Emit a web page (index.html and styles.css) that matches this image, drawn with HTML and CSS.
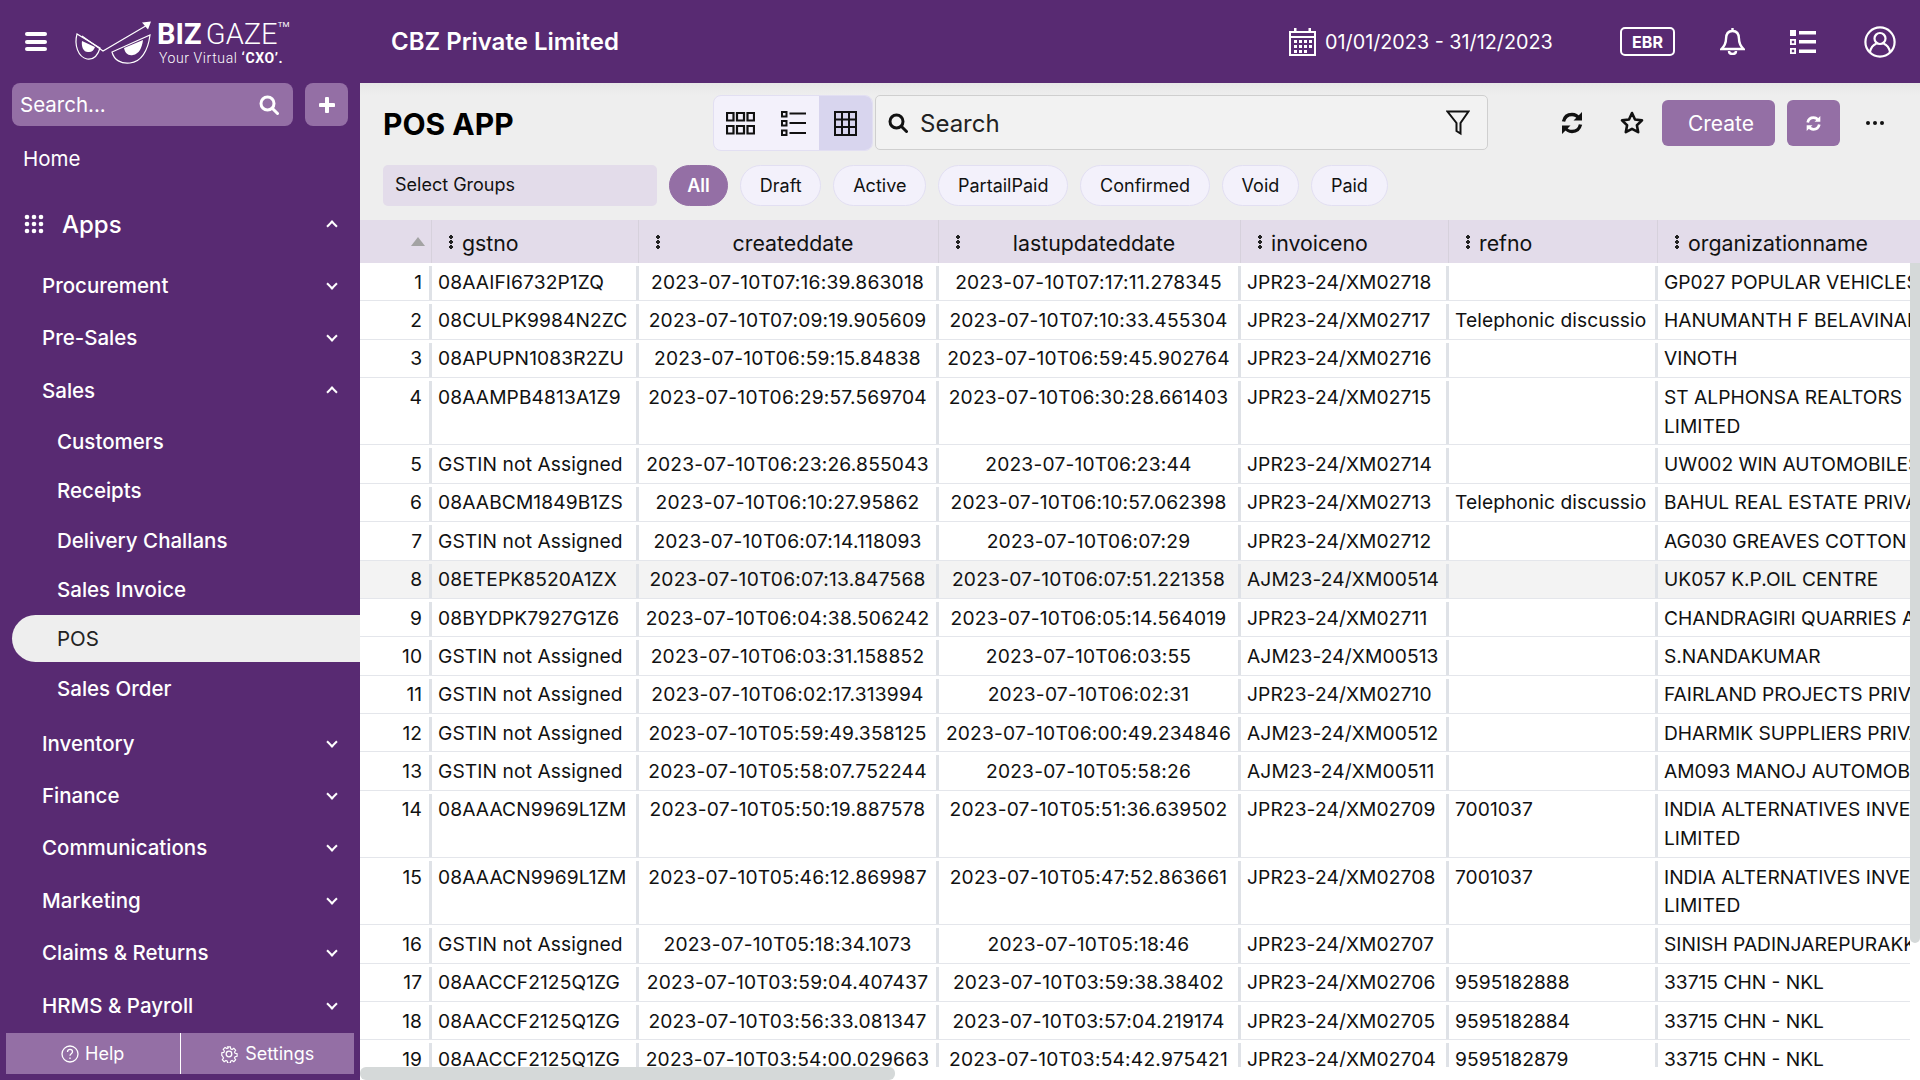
FILE: index.html
```html
<!DOCTYPE html>
<html lang="en">
<head>
    <meta charset="UTF-8">
    <title>POS APP</title>
    <link rel="stylesheet" href="styles.css">
</head>
<body>
    <header class="topbar">
        <div class="burger"><span></span><span></span><span></span></div>
        <div class="logo">
            <svg class="logo-eyes" width="80" height="46" viewBox="0 0 80 46" fill="none" stroke="#fff" stroke-width="1.2">
                <path d="M3 13C0 24 4 36 13 38c7 1 11-4 13-11L3 13z"/>
                <path d="M8 20c-1 6 2 12 7 11 3 0 5-2 6-5L8 20z" fill="#fff" stroke="none"/>
                <path d="M8 15l21 15L75 3"/>
                <path d="M68 1.500l9-1-3 8z" fill="#fff" stroke="none"/>
                <path d="M38 31c2 8 9 12 18 11 11-1 18-12 20-28L38 31z"/>
                <path d="M50 27c1 5 4 8 9 7 6-1 9-7 10-15L50 27z" fill="#fff" stroke="none"/>
            </svg>
            <div class="logo-text">
                <div class="logo-name"><b>BIZ</b> <span>GAZE</span><sup>TM</sup></div>
                <div class="logo-tag">Your Virtual <b>‘CXO’.</b></div>
            </div>
        </div>
        <div class="company">CBZ Private Limited</div>
        <div class="date-range">
            <svg width="27" height="28" viewBox="0 0 27 28" fill="#fff">
                <path d="M5 0h2.500v3h12V0H22v3h5v25H0V3h5V0zM2 5v3h23V5H2zm0 5v16h23V10H2z"/>
                <path d="M5 12h3v3H5zM10 12h3v3h-3zM15 12h3v3h-3zM20 12h3v3h-3zM5 17h3v3H5zM10 17h3v3h-3zM15 17h3v3h-3zM20 17h3v3h-3zM5 22h3v3H5zM10 22h3v3h-3zM15 22h3v3h-3z"/>
            </svg>
            <span>01/01/2023 - 31/12/2023</span>
        </div>
        <div class="ebr">EBR</div>
        <svg class="top-icon bell" width="25" height="27" viewBox="0 0 25 27" fill="none" stroke="#fff" stroke-width="2.400">
            <path d="M12.500 3c-4.500 0-6.500 3.500-6.500 8 0 5-2 7.500-4.500 10h22c-2.500-2.500-4.500-5-4.500-10 0-4.500-2-8-6.500-8z"/>
            <path d="M12.500 0v3M9 23c0 2 1.500 3 3.500 3s3.500-1 3.500-3"/>
        </svg>
        <svg class="top-icon list" width="26" height="24" viewBox="0 0 26 24" fill="#fff">
            <path d="M0 0h6v6H0zM9 1h17v3.500H9zM9 10h17v3.500H9zM9 19.500h17V23H9z"/>
            <path d="M0 9h6v6H0zm1.800 1.800v2.400h2.400v-2.400zM0 18h6v6H0zm1.800 1.800v2.400h2.400v-2.400z" fill-rule="evenodd"/>
        </svg>
        <svg class="top-icon user" width="32" height="32" viewBox="0 0 32 32" fill="none" stroke="#fff" stroke-width="2.200">
            <circle cx="16" cy="16" r="14.600"/>
            <circle cx="16" cy="12.500" r="5.500"/>
            <path d="M6 26c1-5 4-7.500 6.500-8.500M26 26c-1-5-4-7.500-6.500-8.500"/>
        </svg>
    </header>

    <div class="page">
        <aside class="sidebar">
            <div class="side-search">
                <div class="side-input">
                    <span>Search...</span>
                    <svg width="20" height="20" viewBox="0 0 20 20" fill="none" stroke="#fff" stroke-width="3"><circle cx="8.500" cy="8.500" r="6.500"/><path d="M13.500 13.500l5 5" stroke-linecap="round"/></svg>
                </div>
                <div class="side-add">
                    <svg width="16" height="16" viewBox="0 0 16 16"><path d="M8 1.500v13M1.500 8h13" stroke="#fff" stroke-width="4" stroke-linecap="round"/></svg>
                </div>
            </div>
            <nav class="nav">
                <div class="nav-home">Home</div>
                <div class="nav-apps">
                    <svg width="20" height="20" viewBox="0 0 20 20" fill="#fff">
                        <circle cx="3" cy="3" r="2.300"/><circle cx="10" cy="3" r="2.300"/><circle cx="17" cy="3" r="2.300"/>
                        <circle cx="3" cy="10" r="2.300"/><circle cx="10" cy="10" r="2.300"/><circle cx="17" cy="10" r="2.300"/>
                        <circle cx="3" cy="17" r="2.300"/><circle cx="10" cy="17" r="2.300"/><circle cx="17" cy="17" r="2.300"/>
                    </svg>
                    <span>Apps</span>
                    <i class="chev up"></i>
                </div>
                <div class="nav-item"><span>Procurement</span><i class="chev"></i></div>
                <div class="nav-item"><span>Pre-Sales</span><i class="chev"></i></div>
                <div class="nav-item"><span>Sales</span><i class="chev up"></i></div>
                <div class="nav-sub">
                    <div class="sub-item">Customers</div>
                    <div class="sub-item">Receipts</div>
                    <div class="sub-item">Delivery Challans</div>
                    <div class="sub-item">Sales Invoice</div>
                    <div class="sub-item active">POS</div>
                    <div class="sub-item">Sales Order</div>
                </div>
                <div class="nav-item"><span>Inventory</span><i class="chev"></i></div>
                <div class="nav-item"><span>Finance</span><i class="chev"></i></div>
                <div class="nav-item"><span>Communications</span><i class="chev"></i></div>
                <div class="nav-item"><span>Marketing</span><i class="chev"></i></div>
                <div class="nav-item"><span>Claims &amp; Returns</span><i class="chev"></i></div>
                <div class="nav-item"><span>HRMS &amp; Payroll</span><i class="chev"></i></div>
            </nav>
            <div class="side-foot">
                <div class="foot-btn">
                    <svg width="18" height="18" viewBox="0 0 18 18" fill="none" stroke="#fff" stroke-width="1.300"><circle cx="9" cy="9" r="8"/><path d="M6.500 7c0-1.700 1.100-2.600 2.500-2.600s2.500 1 2.500 2.300c0 2-2.500 2-2.500 4"/><path d="M9 12.600v1.500"/></svg>
                    <span>Help</span>
                </div>
                <div class="foot-btn">
                    <svg width="18" height="18" viewBox="0 0 18 18" fill="none" stroke="#fff" stroke-width="1.300"><circle cx="9" cy="9" r="2.800"/><path d="M7.500 1h3l.4 2.300 1.500.7 2-1.300 2 2.100-1.300 1.900.7 1.500 2.200.4v3l-2.200.4-.7 1.500 1.300 1.900-2 2.100-2-1.300-1.500.7-.4 2.300h-3l-.4-2.300-1.500-.7-2 1.300-2-2.100 1.300-1.900-.7-1.500L1 10.600v-3l2.200-.4.700-1.500-1.300-1.900 2-2.100 2 1.300 1.500-.7z" transform="translate(.9 .9) scale(.9)"/></svg>
                    <span>Settings</span>
                </div>
            </div>
        </aside>

        <main class="main">
            <div class="toolbar">
                <h1 class="title">POS APP</h1>
                <div class="view-toggle">
                    <div class="view-btn">
                        <svg width="29" height="23" viewBox="0 0 29 23" fill="none" stroke="#111" stroke-width="2.200"><path d="M1 1h6.500v7.500H1zM11 1h7v7.500h-7zM21.500 1H28v7.500h-6.500zM1 14h6.500v7.500H1zM11 14h7v7.500h-7zM21.500 14H28v7.500h-6.500z"/></svg>
                    </div>
                    <div class="view-btn">
                        <svg width="25" height="25" viewBox="0 0 25 25" fill="none" stroke="#111" stroke-width="2"><path d="M1 1h4.500v4.500H1zM1 10h4.500v4.500H1zM1 19.500h4.500V24H1zM8.500 2.500H25M8.500 12H25M8.500 22H25"/></svg>
                    </div>
                    <div class="view-btn active">
                        <svg width="23" height="25" viewBox="0 0 23 25" fill="none" stroke="#111" stroke-width="2"><path d="M1 1h21v23H1zM1 8.500h21M1 16h21M8 1v23M15 1v23"/></svg>
                    </div>
                </div>
                <div class="search-box">
                    <svg width="20" height="20" viewBox="0 0 20 20" fill="none" stroke="#111" stroke-width="3"><circle cx="8.500" cy="8.500" r="6.500"/><path d="M13.500 13.500l5 5" stroke-linecap="round"/></svg>
                    <span class="search-text">Search</span>
                    <svg width="24" height="26" viewBox="0 0 24 26" fill="none" stroke="#111" stroke-width="2"><path d="M1.500 1.500h21L14.500 13v10.500l-4-2.500v-8z"/></svg>
                </div>
                <div class="actions">
                    <svg class="act-refresh" width="22" height="22" viewBox="0 0 22 22" fill="none" stroke="#111" stroke-width="3.400"><path d="M2.500 9.500C3.500 5 6.500 2.500 11 2.500c3 0 5.500 1.500 7 4"/><path d="M19.500 12.500c-1 4.500-4 7-8.500 7-3 0-5.500-1.500-7-4"/><path d="M21 0v8.500h-8.500zM1 22v-8.500h8.500z" fill="#111" stroke="none"/></svg>
                    <svg class="act-star" width="24" height="24" viewBox="0 0 24 24" fill="none" stroke="#111" stroke-width="2.600" stroke-linejoin="round"><path d="M12 2l3 6.500 7 .9-5.100 4.800 1.300 7L12 17.800l-6.200 3.400 1.300-7L2 9.400l7-.9z"/></svg>
                    <button class="btn-create">Create</button>
                    <button class="btn-sync">
                        <svg width="15" height="15" viewBox="0 0 22 22" fill="none" stroke="#fff" stroke-width="4"><path d="M2.500 9.500C3.500 5 6.500 2.500 11 2.500c3 0 5.500 1.500 7 4"/><path d="M19.500 12.500c-1 4.500-4 7-8.500 7-3 0-5.500-1.500-7-4"/><path d="M21 0v8.500h-8.500zM1 22v-8.500h8.500z" fill="#fff" stroke="none"/></svg>
                    </button>
                    <div class="more"><span></span><span></span><span></span></div>
                </div>
            </div>

            <div class="filters">
                <div class="select-groups">Select Groups</div>
                <div class="pills">
                    <div class="pill on">All</div>
                    <div class="pill">Draft</div>
                    <div class="pill">Active</div>
                    <div class="pill">PartailPaid</div>
                    <div class="pill">Confirmed</div>
                    <div class="pill">Void</div>
                    <div class="pill">Paid</div>
                </div>
            </div>

            <div class="grid">
                <div class="grid-head">
                    <div class="hd c-no"><i class="sort"></i></div>
                    <div class="hd c-gst"><i class="dots"></i><span>gstno</span></div>
                    <div class="hd c-created center"><i class="dots"></i><span>createddate</span></div>
                    <div class="hd c-updated center"><i class="dots"></i><span>lastupdateddate</span></div>
                    <div class="hd c-inv"><i class="dots"></i><span>invoiceno</span></div>
                    <div class="hd c-ref"><i class="dots"></i><span>refno</span></div>
                    <div class="hd c-org"><i class="dots"></i><span>organizationname</span></div>
                </div>
                <div class="grid-mid">
                    <div class="grid-body">
                        <div class="row"><div class="c-no">1</div><div class="c-gst">08AAIFI6732P1ZQ</div><div class="c-created">2023-07-10T07:16:39.863018</div><div class="c-updated">2023-07-10T07:17:11.278345</div><div class="c-inv">JPR23-24/XM02718</div><div class="c-ref"></div><div class="c-org">GP027 POPULAR VEHICLES</div></div>
                        <div class="row"><div class="c-no">2</div><div class="c-gst">08CULPK9984N2ZC</div><div class="c-created">2023-07-10T07:09:19.905609</div><div class="c-updated">2023-07-10T07:10:33.455304</div><div class="c-inv">JPR23-24/XM02717</div><div class="c-ref">Telephonic discussio</div><div class="c-org">HANUMANTH F BELAVINAL</div></div>
                        <div class="row"><div class="c-no">3</div><div class="c-gst">08APUPN1083R2ZU</div><div class="c-created">2023-07-10T06:59:15.84838</div><div class="c-updated">2023-07-10T06:59:45.902764</div><div class="c-inv">JPR23-24/XM02716</div><div class="c-ref"></div><div class="c-org">VINOTH</div></div>
                        <div class="row"><div class="c-no">4</div><div class="c-gst">08AAMPB4813A1Z9</div><div class="c-created">2023-07-10T06:29:57.569704</div><div class="c-updated">2023-07-10T06:30:28.661403</div><div class="c-inv">JPR23-24/XM02715</div><div class="c-ref"></div><div class="c-org">ST ALPHONSA REALTORS<br>LIMITED</div></div>
                        <div class="row"><div class="c-no">5</div><div class="c-gst">GSTIN not Assigned</div><div class="c-created">2023-07-10T06:23:26.855043</div><div class="c-updated">2023-07-10T06:23:44</div><div class="c-inv">JPR23-24/XM02714</div><div class="c-ref"></div><div class="c-org">UW002 WIN AUTOMOBILES</div></div>
                        <div class="row"><div class="c-no">6</div><div class="c-gst">08AABCM1849B1ZS</div><div class="c-created">2023-07-10T06:10:27.95862</div><div class="c-updated">2023-07-10T06:10:57.062398</div><div class="c-inv">JPR23-24/XM02713</div><div class="c-ref">Telephonic discussio</div><div class="c-org">BAHUL REAL ESTATE PRIVATE</div></div>
                        <div class="row"><div class="c-no">7</div><div class="c-gst">GSTIN not Assigned</div><div class="c-created">2023-07-10T06:07:14.118093</div><div class="c-updated">2023-07-10T06:07:29</div><div class="c-inv">JPR23-24/XM02712</div><div class="c-ref"></div><div class="c-org">AG030 GREAVES COTTON</div></div>
                        <div class="row hover"><div class="c-no">8</div><div class="c-gst">08ETEPK8520A1ZX</div><div class="c-created">2023-07-10T06:07:13.847568</div><div class="c-updated">2023-07-10T06:07:51.221358</div><div class="c-inv">AJM23-24/XM00514</div><div class="c-ref"></div><div class="c-org">UK057 K.P.OIL CENTRE</div></div>
                        <div class="row"><div class="c-no">9</div><div class="c-gst">08BYDPK7927G1Z6</div><div class="c-created">2023-07-10T06:04:38.506242</div><div class="c-updated">2023-07-10T06:05:14.564019</div><div class="c-inv">JPR23-24/XM02711</div><div class="c-ref"></div><div class="c-org">CHANDRAGIRI QUARRIES AND</div></div>
                        <div class="row"><div class="c-no">10</div><div class="c-gst">GSTIN not Assigned</div><div class="c-created">2023-07-10T06:03:31.158852</div><div class="c-updated">2023-07-10T06:03:55</div><div class="c-inv">AJM23-24/XM00513</div><div class="c-ref"></div><div class="c-org">S.NANDAKUMAR</div></div>
                        <div class="row"><div class="c-no">11</div><div class="c-gst">GSTIN not Assigned</div><div class="c-created">2023-07-10T06:02:17.313994</div><div class="c-updated">2023-07-10T06:02:31</div><div class="c-inv">JPR23-24/XM02710</div><div class="c-ref"></div><div class="c-org">FAIRLAND PROJECTS PRIVATE</div></div>
                        <div class="row"><div class="c-no">12</div><div class="c-gst">GSTIN not Assigned</div><div class="c-created">2023-07-10T05:59:49.358125</div><div class="c-updated">2023-07-10T06:00:49.234846</div><div class="c-inv">AJM23-24/XM00512</div><div class="c-ref"></div><div class="c-org">DHARMIK SUPPLIERS PRIVATE</div></div>
                        <div class="row"><div class="c-no">13</div><div class="c-gst">GSTIN not Assigned</div><div class="c-created">2023-07-10T05:58:07.752244</div><div class="c-updated">2023-07-10T05:58:26</div><div class="c-inv">AJM23-24/XM00511</div><div class="c-ref"></div><div class="c-org">AM093 MANOJ AUTOMOBILES</div></div>
                        <div class="row"><div class="c-no">14</div><div class="c-gst">08AAACN9969L1ZM</div><div class="c-created">2023-07-10T05:50:19.887578</div><div class="c-updated">2023-07-10T05:51:36.639502</div><div class="c-inv">JPR23-24/XM02709</div><div class="c-ref">7001037</div><div class="c-org">INDIA ALTERNATIVES INVESTMENT<br>LIMITED</div></div>
                        <div class="row"><div class="c-no">15</div><div class="c-gst">08AAACN9969L1ZM</div><div class="c-created">2023-07-10T05:46:12.869987</div><div class="c-updated">2023-07-10T05:47:52.863661</div><div class="c-inv">JPR23-24/XM02708</div><div class="c-ref">7001037</div><div class="c-org">INDIA ALTERNATIVES INVESTMENT<br>LIMITED</div></div>
                        <div class="row"><div class="c-no">16</div><div class="c-gst">GSTIN not Assigned</div><div class="c-created">2023-07-10T05:18:34.1073</div><div class="c-updated">2023-07-10T05:18:46</div><div class="c-inv">JPR23-24/XM02707</div><div class="c-ref"></div><div class="c-org">SINISH PADINJAREPURAKKAL</div></div>
                        <div class="row"><div class="c-no">17</div><div class="c-gst">08AACCF2125Q1ZG</div><div class="c-created">2023-07-10T03:59:04.407437</div><div class="c-updated">2023-07-10T03:59:38.38402</div><div class="c-inv">JPR23-24/XM02706</div><div class="c-ref">9595182888</div><div class="c-org">33715 CHN - NKL</div></div>
                        <div class="row"><div class="c-no">18</div><div class="c-gst">08AACCF2125Q1ZG</div><div class="c-created">2023-07-10T03:56:33.081347</div><div class="c-updated">2023-07-10T03:57:04.219174</div><div class="c-inv">JPR23-24/XM02705</div><div class="c-ref">9595182884</div><div class="c-org">33715 CHN - NKL</div></div>
                        <div class="row"><div class="c-no">19</div><div class="c-gst">08AACCF2125Q1ZG</div><div class="c-created">2023-07-10T03:54:00.029663</div><div class="c-updated">2023-07-10T03:54:42.975421</div><div class="c-inv">JPR23-24/XM02704</div><div class="c-ref">9595182879</div><div class="c-org">33715 CHN - NKL</div></div>
                    </div>
                    <div class="vscroll"><div class="vthumb"></div></div>
                </div>
                <div class="hscroll"><div class="hthumb"></div></div>
            </div>
        </main>
    </div>
</body>
</html>
```

FILE: styles.css
```css
* {
    box-sizing: border-box;
}
html, body {
    height: 100%;
}
body {
    margin: 0;
    font-family: Inter, "Noto Sans", sans-serif;
    color: #111;
    background: #eee;
    overflow: hidden;
}

/* top bar */
.topbar {
    height: 83px;
    background: #582a72;
    color: #fff;
    display: flex;
    align-items: center;
}
.burger {
    width: 22px;
    margin-left: 25px;
    display: flex;
    flex-direction: column;
    gap: 3.500px;
}
.burger span {
    height: 4px;
    background: #fff;
    border-radius: 2px;
}
.logo {
    margin-left: 27px;
    width: 317px;
    padding-top: 3px;
    display: flex;
    align-items: flex-start;
}
.logo-eyes {
    margin-top: 2px;
}
.logo-text {
    margin-left: 3px;
    font-family: Roboto, sans-serif;
}
.logo-name {
    font-size: 29px;
    line-height: 30px;
    white-space: nowrap;
}
.logo-name b {
    font-weight: 700;
}
.logo-name span {
    font-weight: 300;
    margin-left: -3px;
}
.logo-name sup {
    font-size: 8px;
    line-height: 0;
    vertical-align: 17px;
}
.logo-tag {
    margin: 2px 0 0 2px;
    font-size: 14px;
    line-height: 14px;
    font-weight: 300;
    letter-spacing: 0.6px;
    white-space: nowrap;
}
.logo-tag b {
    font-weight: 700;
}
.company {
    font-size: 24px;
    font-weight: 600;
    width: 898px;
}
.date-range {
    width: 331px;
    display: flex;
    align-items: center;
    gap: 9px;
    font-size: 19.800px;
}
.ebr {
    width: 55px;
    height: 29px;
    border: 2.500px solid #fff;
    border-radius: 5px;
    font-size: 16px;
    font-weight: 700;
    display: flex;
    align-items: center;
    justify-content: center;
}
.bell {
    margin-left: 45px;
}
.list {
    margin-left: 45px;
}
.user {
    margin-left: 48px;
}

/* sidebar */
.page {
    display: flex;
    height: 997px;
}
.sidebar {
    width: 360px;
    flex-shrink: 0;
    background: #582a72;
    color: #fff;
    display: flex;
    flex-direction: column;
    overflow: hidden;
}
.side-search {
    display: flex;
    gap: 12px;
    padding-left: 12px;
}
.side-input {
    width: 281px;
    height: 43px;
    background: #946fa5;
    border-radius: 8px;
    padding: 0 7px 0 8px;
    display: flex;
    align-items: center;
    justify-content: space-between;
    font-size: 20.500px;
}
.side-input svg {
    margin-right: 7px;
}
.side-add {
    width: 43px;
    height: 43px;
    background: #946fa5;
    border-radius: 8px;
    display: flex;
    align-items: center;
    justify-content: center;
}
.nav {
    flex: 1;
    min-height: 0;
    padding-top: 15px;
}
.nav-home {
    padding-left: 23px;
    font-size: 20.500px;
    line-height: 36px;
}
.nav-apps {
    margin-top: 23px;
    height: 48px;
    padding: 0 23px 0 24px;
    display: flex;
    align-items: center;
    font-size: 24px;
    font-weight: 500;
}
.nav-apps span {
    margin-left: 18px;
    flex: 1;
}
.nav-item {
    height: 52.400px;
    padding: 0 23px 0 42px;
    display: flex;
    align-items: center;
    justify-content: space-between;
    font-size: 20.500px;
    font-weight: 500;
}
.nav-apps + .nav-item {
    margin-top: 11.400px;
}
.nav-sub {
    padding-bottom: 4.100px;
}
.sub-item {
    height: 49.400px;
    padding-left: 45px;
    margin-left: 12px;
    display: flex;
    align-items: center;
    font-size: 20.500px;
}
.sub-item:not(.active) {
    font-weight: 500;
}
.sub-item.active {
    background: #eee;
    color: #222;
    border-radius: 24px 0 0 24px;
    height: 47px;
    margin: 1px 0 1.400px 12px;
}
.chev {
    width: 8px;
    height: 8px;
    border-right: 2.500px solid #fff;
    border-bottom: 2.500px solid #fff;
    transform: rotate(45deg);
    margin: -3px 1px 0 0;
}
.chev.up {
    transform: rotate(225deg);
    margin-top: 4px;
}
.side-foot {
    display: flex;
    height: 41px;
    margin: 0 6px 6px;
    background: #946fa5;
    flex-shrink: 0;
}
.foot-btn {
    flex: 1;
    display: flex;
    align-items: center;
    justify-content: center;
    gap: 6px;
    font-size: 18px;
}
.foot-btn + .foot-btn {
    border-left: 1px solid #fff;
    gap: 7px;
}

/* toolbar */
.main {
    flex: 1;
    min-width: 0;
    display: flex;
    flex-direction: column;
    background: linear-gradient(#e7e7e7, #eee 12px);
}
.toolbar {
    height: 82px;
    padding-top: 12px;
    padding-left: 23px;
    display: flex;
    align-items: flex-start;
}
.title {
    margin: 0;
    width: 330px;
    font-size: 30px;
    line-height: 58px;
    font-weight: 700;
    color: #000;
}
.view-toggle {
    width: 160px;
    height: 56px;
    background: #f3f1fb;
    border: 1px solid #e2dff2;
    border-radius: 8px;
    display: flex;
    overflow: hidden;
}
.view-btn {
    width: 53px;
    display: flex;
    align-items: center;
    justify-content: center;
}
.view-btn.active {
    background: #d8d5ee;
}
.search-box {
    width: 613px;
    height: 55px;
    margin-left: 2px;
    background: #f2f2f2;
    border: 1.500px solid #cfcfcf;
    border-radius: 5px;
    padding: 0 17px 0 12px;
    display: flex;
    align-items: center;
}
.search-text {
    flex: 1;
    font-size: 24px;
    padding-top: 2px;
    margin-left: 12px;
    color: #222;
}
.actions {
    display: flex;
    align-items: center;
    height: 46px;
    margin-top: 5px;
}
.act-refresh {
    margin-left: 73px;
}
.act-star {
    margin-left: 37px;
}
.btn-create {
    margin-left: 18px;
    width: 113px;
    height: 46px;
    padding: 0 0 0 5px;
    border: none;
    border-radius: 6px;
    background: #946fa5;
    color: #fff;
    font-family: inherit;
    font-size: 21px;
}
.btn-sync {
    margin-left: 12px;
    width: 53px;
    height: 46px;
    border: none;
    border-radius: 6px;
    background: #946fa5;
    display: flex;
    align-items: center;
    justify-content: center;
}
.more {
    margin-left: 26px;
    display: flex;
    gap: 3px;
}
.more span {
    width: 4px;
    height: 4px;
    border-radius: 50%;
    background: #111;
}

/* filters */
.filters {
    height: 55px;
    padding-left: 23px;
    display: flex;
    align-items: flex-start;
}
.select-groups {
    width: 274px;
    height: 41px;
    background: #e3dcea;
    border-radius: 5px;
    padding-left: 12px;
    font-size: 18px;
    line-height: 39px;
}
.pills {
    display: flex;
    gap: 12px;
    margin-left: 12px;
}
.pill {
    height: 41px;
    padding: 0 18.800px;
    border: 1px solid #e2dff2;
    border-radius: 21px;
    background: #f3f1fb;
    font-size: 18px;
    line-height: 39px;
}
.pill.on {
    width: 59px;
    padding: 0;
    text-align: center;
    background: #946fa5;
    border-color: #946fa5;
    color: #fff;
    font-weight: 600;
}

/* grid */
.grid {
    flex: 1;
    min-height: 0;
    background: #fff;
    display: flex;
    flex-direction: column;
}
.grid-head {
    height: 43px;
    flex-shrink: 0;
    background: #e3dcea;
    display: flex;
    font-size: 21.300px;
}
.hd {
    display: flex;
    align-items: center;
    padding-left: 17px;
    padding-top: 3px;
    border-right: 1px solid #d6d1dc;
}
.hd span {
    margin-left: 9px;
}
.hd.center span {
    flex: 1;
    margin-left: 0;
    padding-right: 12px;
    text-align: center;
}
.dots {
    width: 4px;
    height: 14px;
    margin-top: -3px;
    flex-shrink: 0;
    background: radial-gradient(circle at 2px 2px, #222 1.700px, transparent 2px) 0 0 / 4px 5px;
}
.sort {
    margin: -3px 0 0 51px;
    border-left: 7px solid transparent;
    border-right: 7px solid transparent;
    border-bottom: 9px solid #a3a3a3;
}
.grid-mid {
    flex: 1;
    min-height: 0;
    display: flex;
}
.grid-body {
    width: 1550px;
    overflow: hidden;
    font-size: 19.200px;
    line-height: 28.800px;
}
.row {
    display: flex;
    border-bottom: 1px solid #e4e6eb;
}
.row.hover {
    background: #f3f3f3;
}
.row > div {
    flex-shrink: 0;
    padding: 4.600px 0 4px 6px;
    white-space: nowrap;
    overflow: hidden;
    background: linear-gradient(#dfe2e7, #dfe2e7) right bottom / 3px calc(100% - 3px) no-repeat;
}
.row > .c-no {
    text-align: right;
    padding-right: 10px;
}
.row > .c-gst, .row > .c-inv {
    letter-spacing: 0.1px;
}
.row > .c-ref {
    letter-spacing: 0.06px;
}
.row > .c-created, .row > .c-updated {
    text-align: center;
    padding-left: 0;
    padding-right: 3px;
    letter-spacing: 0.2px;
}
.row > .c-org {
    background: none;
}
.c-no { width: 72px; padding-left: 0; }
.c-gst { width: 207px; }
.c-created { width: 300px; }
.c-updated { width: 302px; }
.c-inv { width: 208px; }
.c-ref { width: 209px; }
.c-org { width: 262px; }
.hd.c-no { padding-left: 0; }
.hd.c-org { border-right: none; }
.vscroll {
    width: 10px;
}
.vthumb {
    height: 680px;
    background: #d5d9d9;
    border-radius: 0 0 5px 5px;
}
.hscroll {
    height: 13px;
    flex-shrink: 0;
}
.hthumb {
    width: 535px;
    height: 13px;
    background: #d5d9d9;
    border-radius: 6px;
}
```
